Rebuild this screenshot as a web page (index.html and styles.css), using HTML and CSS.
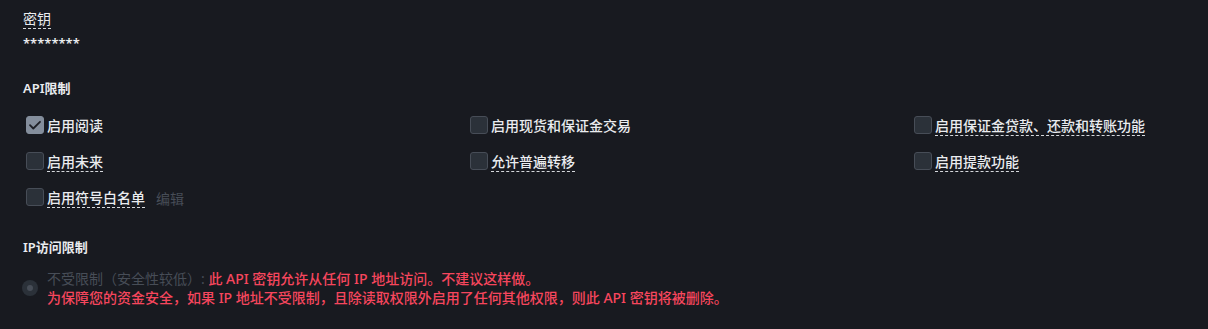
FILE: index.html
```html
<!DOCTYPE html>
<html lang="zh-CN">
<head>
<meta charset="utf-8">
<link rel="stylesheet" href="styles.css">
</head>
<body>
<div class="page">
  <div class="key-label"><span class="dash">密钥</span></div>
  <div class="key-value">********</div>

  <div class="section-title">API限制</div>
  <div class="perm-grid">
    <div class="perm"><span class="box checked"><svg viewBox="0 0 18 18" width="18" height="18"><path d="M4 9.2l3.3 3.3L14 5.8" fill="none" stroke="#1e2026" stroke-width="1.8" stroke-linecap="round" stroke-linejoin="round"/></svg></span><span class="lbl">启用阅读</span></div>
    <div class="perm"><span class="box"></span><span class="lbl">启用现货和保证金交易</span></div>
    <div class="perm"><span class="box"></span><span class="lbl dash">启用保证金贷款、还款和转账功能</span></div>
    <div class="perm"><span class="box"></span><span class="lbl dash">启用未来</span></div>
    <div class="perm"><span class="box"></span><span class="lbl dash">允许普遍转移</span></div>
    <div class="perm"><span class="box"></span><span class="lbl dash">启用提款功能</span></div>
    <div class="perm"><span class="box"></span><span class="lbl dash">启用符号白名单</span><span class="edit">编辑</span></div>
  </div>

  <div class="section-title ip-title">IP访问限制</div>
  <div class="radios">
    <div class="radio-opt">
      <span class="radio"><span class="dot"></span></span>
      <div class="radio-text">
        <div><span class="muted">不受限制（安全性较低）:</span> <span class="warn">此 API 密钥允许从任何 IP 地址访问。不建议这样做。</span></div>
        <div class="warn">为保障您的资金安全，如果 IP 地址不受限制，且除读取权限外启用了任何其他权限，则此 API 密钥将被删除。</div>
      </div>
    </div>
    <div class="radio-opt">
      <span class="radio"></span>
      <div class="radio-text"><span class="muted">仅限受信任 IP 访问（推荐）</span></div>
    </div>
  </div>
</div>
</body>
</html>
```
FILE: styles.css
```css
* { box-sizing: border-box; }
html, body { margin: 0; padding: 0; }
body {
  background: #181a20;
  color: #eaecef;
  font-family: "Noto Sans", "Noto Sans CJK SC", sans-serif;
  overflow: hidden;
}
.page {
  padding: 9px 23px 0 23px;
}
.dash {
  display: inline-block;
  border-bottom: 1px dashed #d5d8dc;
}
.key-label {
  font-size: 14px;
  line-height: 19px;
}
.key-label .dash { line-height: 19px; }
.key-value {
  font-size: 13px;
  line-height: 14px;
  margin-top: 7px;
  font-weight: 600;
}
.section-title {
  font-size: 13px;
  line-height: 20px;
  font-weight: 600;
  margin-top: 28px;
}
.perm-grid {
  display: grid;
  grid-template-columns: 444px 444px auto;
  grid-auto-rows: 36px;
  margin-top: 10px;
  margin-left: 3px;
}
.perm {
  display: flex;
  align-items: center;
  gap: 3px;
  font-size: 14px;
  font-weight: 500;
}
.box {
  width: 18px;
  height: 18px;
  border-radius: 3px;
  background: #2b3139;
  border: 1px solid #474d57;
  flex: none;
  position: relative;
  top: -1px;
}
.box.checked {
  background: #848e9c;
  border-color: #848e9c;
}
.box svg { display: block; margin: -1px; }
.lbl { line-height: 18px; }
.edit {
  color: #474d57;
  margin-left: 8px;
  font-weight: 400;
}
.ip-title { margin-top: 21px; }
.radios {
  margin-top: 12px;
  display: flex;
  flex-direction: column;
  gap: 26px;
}
.radio-opt {
  display: flex;
  align-items: center;
  gap: 9px;
  font-size: 14px;
  line-height: 19px;
}
.radio {
  width: 16px;
  height: 16px;
  border-radius: 50%;
  background: #2b3139;
  flex: none;
  display: flex;
  align-items: center;
  justify-content: center;
  margin-left: -1px;
}
.dot {
  width: 6px;
  height: 6px;
  border-radius: 50%;
  background: #474d57;
}
.muted { color: #474d57; }
.warn { color: #f6465d; font-weight: 500; }
```
